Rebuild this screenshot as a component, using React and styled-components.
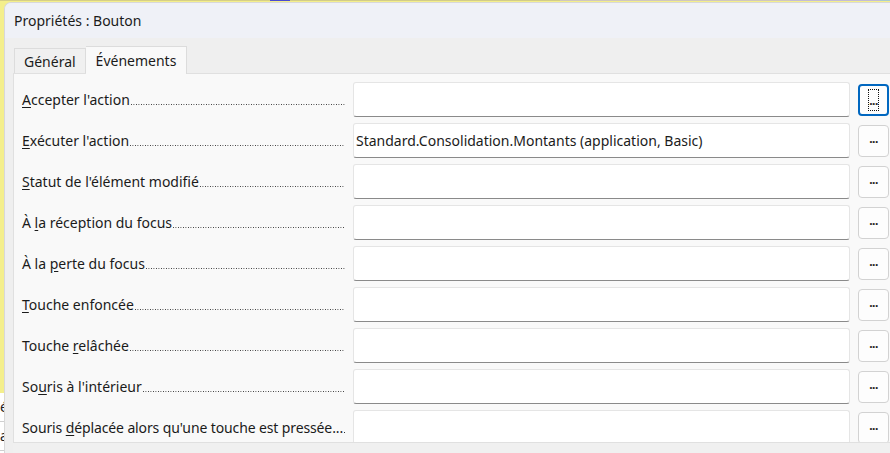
import React from 'react'
import styled, { createGlobalStyle } from 'styled-components'

const GlobalStyle = createGlobalStyle`
  html, body {
    margin: 0;
    padding: 0;
    background: #f4ef8c;
  }
  body {
    font-family: 'Noto Sans', 'Open Sans', sans-serif;
    color: #1b1b1b;
    overflow: hidden;
  }
`

const events = [
  { parts: ['', 'A', "ccepter l'action"] },
  { parts: ['', 'E', "xécuter l'action"], value: 'Standard.Consolidation.Montants (application, Basic)' },
  { parts: ['', 'S', "tatut de l'élément modifié"] },
  { parts: ['À ', 'l', 'a réception du focus'] },
  { parts: ['À la ', 'p', 'erte du focus'] },
  { parts: ['', 'T', 'ouche enfoncée'] },
  { parts: ['Touche ', 'r', 'elâchée'] },
  { parts: ['So', 'u', "ris à l'intérieur"] },
  { parts: ['Souris ', 'd', "éplacée alors qu'une touche est pressée..."], tight: true },
]

export default function App() {
  return (
    <>
      <GlobalStyle />
      <Screen>
        <TopStripe />
        <Desk>
          <LeftStrip>
            <Wallpaper />
            <BehindApp>
              <BehindLine>é</BehindLine>
              <BehindLine>a</BehindLine>
            </BehindApp>
          </LeftStrip>
          <Window>
            <TitleBar>Propriétés : Bouton</TitleBar>
            <Body>
              <Tabs>
                <Tab>Général</Tab>
                <Tab active>Événements</Tab>
              </Tabs>
              <Panel>
                {events.map((ev, i) => (
                  <Row key={i}>
                    <Label tight={ev.tight}>
                      <LabelText>
                        {ev.parts[0]}
                        <Mnemonic>{ev.parts[1]}</Mnemonic>
                        {ev.parts[2]}
                      </LabelText>
                      <Dots />
                    </Label>
                    <Field>{ev.value}</Field>
                    <DotButton focused={i === 0}>
                      <ButtonFace focused={i === 0}>...</ButtonFace>
                    </DotButton>
                  </Row>
                ))}
              </Panel>
              <Footer />
            </Body>
          </Window>
        </Desk>
      </Screen>
    </>
  )
}

const Screen = styled.div`
  width: 890px;
  height: 453px;
  display: flex;
  flex-direction: column;
  overflow: hidden;
`

const TopStripe = styled.div`
  height: 1px;
  flex: none;
  background: linear-gradient(
    to right,
    #d6cf86 0 270px,
    #4a4ad0 270px 290px,
    #d2cc88 290px 560px,
    #cfc7bf 560px 790px,
    #c2bcd6 790px 880px,
    #a9cbd0 880px 890px
  );
`

const Desk = styled.div`
  flex: 1;
  display: flex;
  min-height: 0;
`

const LeftStrip = styled.div`
  width: 4px;
  flex: none;
  display: flex;
  flex-direction: column;
`

const Wallpaper = styled.div`
  flex: 1;
  background: #f4ef8c;
`

const BehindApp = styled.div`
  height: 60px;
  background: #ffffff;
  display: flex;
  flex-direction: column;
  overflow: hidden;
`

const BehindLine = styled.div`
  height: 28px;
  line-height: 28px;
  font-size: 14px;
  border-bottom: 1px solid #cfcfcf;
  color: #222;
`

const Window = styled.div`
  flex: 1;
  display: flex;
  flex-direction: column;
  margin-top: 1px;
  border-top-left-radius: 7px;
  border-left: 1px solid #d8d8d8;
  border-top: 1px solid #d8d8d8;
  overflow: hidden;
  background: #f0f0f0;
`

const TitleBar = styled.div`
  height: 35px;
  flex: none;
  display: flex;
  align-items: center;
  padding-left: 9px;
  font-size: 14px;
  background: #eff1f7;
  color: #1b1b1b;
`

const Body = styled.div`
  flex: 1;
  display: flex;
  flex-direction: column;
  padding-left: 8px;
  background: #efefef;
  min-height: 0;
`

const Tabs = styled.div`
  display: flex;
  align-items: flex-end;
  height: 35px;
  padding-left: 1px;
  flex: none;
`

const Tab = styled.div`
  height: ${(p) => (p.active ? '28px' : '25px')};
  padding: 0 ${(p) => (p.active ? '10px' : '9px')};
  display: flex;
  align-items: center;
  font-size: 14px;
  box-sizing: border-box;
  background: ${(p) => (p.active ? '#f9f9f9' : '#f0f0f0')};
  border: 1px solid #dcdcdc;
  border-bottom: none;
  margin-bottom: ${(p) => (p.active ? '-1px' : '0')};
  position: relative;
  z-index: ${(p) => (p.active ? 1 : 0)};
  & + & {
    border-left: none;
  }
`

const Panel = styled.div`
  height: 370px;
  flex: none;
  box-sizing: border-box;
  background: #f9f9f9;
  border: 1px solid #e0e0e0;
  border-right: none;
  padding: 5px 0 0 8px;
  overflow: hidden;
  display: flex;
  flex-direction: column;
`

const Row = styled.div`
  height: 41px;
  flex: none;
  display: flex;
  align-items: center;
`

const Label = styled.div`
  width: 323px;
  flex: none;
  display: flex;
  align-items: baseline;
  font-size: 14px;
  letter-spacing: ${(p) => (p.tight ? '-0.12px' : '0')};
  white-space: nowrap;
  margin-right: 8px;
`

const LabelText = styled.span`
  flex: none;
`

const Mnemonic = styled.span`
  text-decoration: underline;
  text-underline-offset: 2px;
`

const Dots = styled.span`
  flex: 1;
  min-width: 0;
  height: 1px;
  margin-left: 1px;
  background-image: linear-gradient(to right, #333 1px, transparent 1px);
  background-size: 2.5px 1px;
  background-repeat: repeat-x;
`

const Field = styled.div`
  width: 497px;
  height: 35px;
  flex: none;
  box-sizing: border-box;
  background: #ffffff;
  border: 1px solid #e5e5e5;
  border-bottom: 1px solid #8a8a8a;
  border-radius: 3px;
  display: flex;
  align-items: center;
  padding-left: 2px;
  font-size: 14px;
  white-space: nowrap;
  overflow: hidden;
`

const DotButton = styled.div`
  width: 31px;
  height: 32px;
  flex: none;
  margin-left: 8px;
  box-sizing: border-box;
  border-radius: 4px;
  background: #fdfdfd;
  border: ${(p) => (p.focused ? '2px solid #0067c0' : '1px solid #d2d2d2')};
  display: flex;
  align-items: center;
  justify-content: center;
`

const ButtonFace = styled.div`
  font-size: 12px;
  font-weight: bold;
  letter-spacing: -0.5px;
  color: #222;
  box-sizing: border-box;
  display: flex;
  align-items: flex-end;
  justify-content: center;
  padding-bottom: 3px;
  width: ${(p) => (p.focused ? '11px' : 'auto')};
  height: ${(p) => (p.focused ? '22px' : 'auto')};
  border: ${(p) => (p.focused ? '1px dotted #111' : 'none')};
  line-height: 1;
`

const Footer = styled.div`
  flex: 1;
  background: #f0f0f0;
`
